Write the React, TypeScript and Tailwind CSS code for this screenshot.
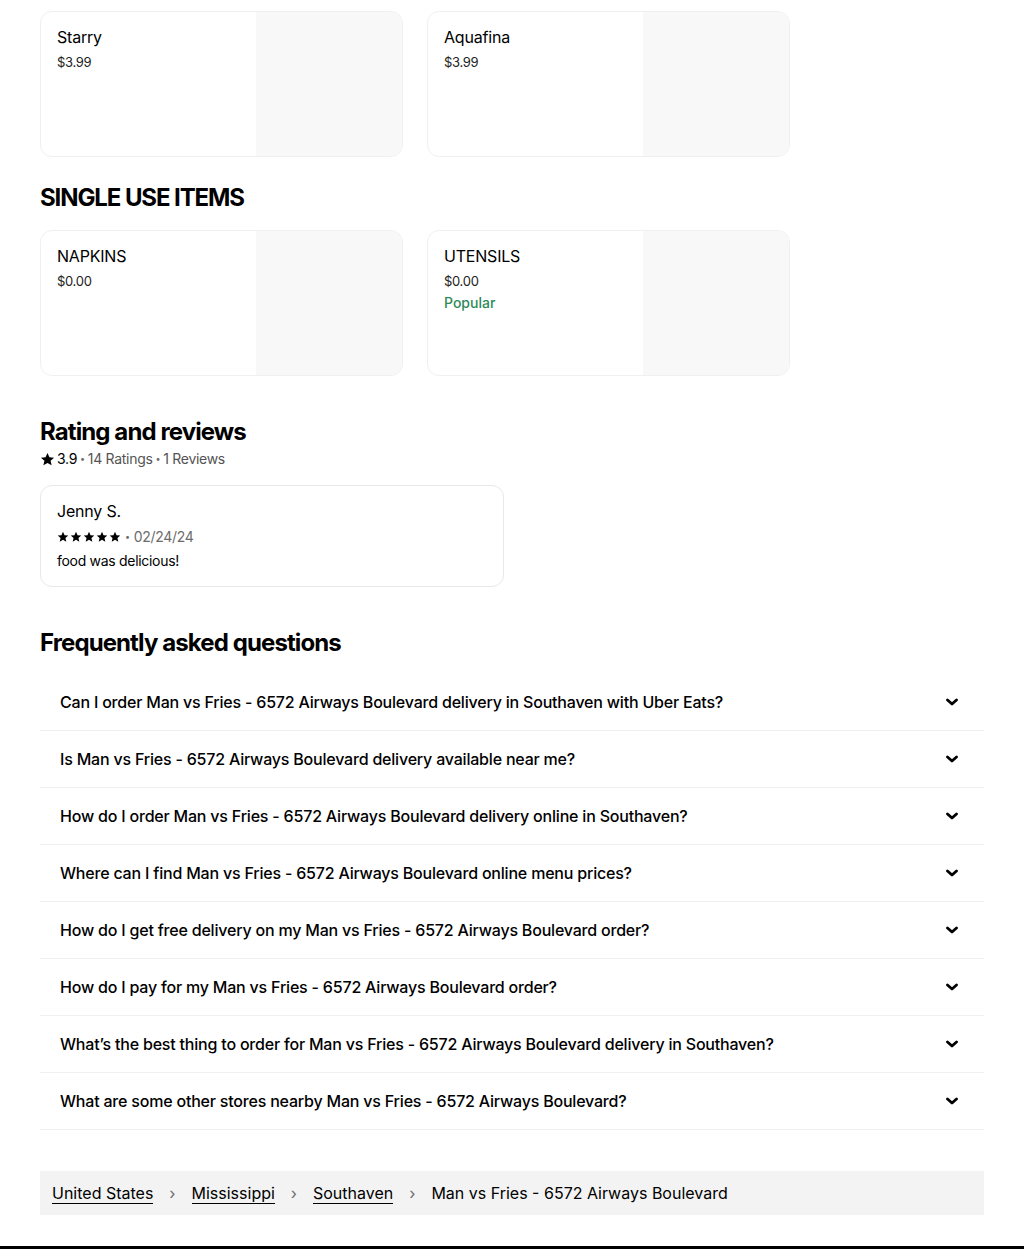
import React from "react";

const font = { fontFamily: "Inter, 'Liberation Sans', sans-serif" };

function ItemCard({ name, price, popular }: { name: string; price: string; popular?: boolean }) {
  return (
    <div className="flex h-[146px] w-[363px] overflow-hidden rounded-xl border border-[#f0f0f0] bg-white">
      <div className="flex-1 px-4 pt-[13px]">
        <div className="text-[16px] leading-6 tracking-[-0.2px] text-black">{name}</div>
        <div className="mt-[3px] text-[13px] leading-5 tracking-[-0.3px] text-[#222]">{price}</div>
        {popular && <div className="mt-[2px] text-[14px] font-medium leading-5 text-[#2e8a57]">Popular</div>}
      </div>
      <div className="h-full w-[146px] bg-[#f8f8f8]" />
    </div>
  );
}

function Star({ size = 12 }: { size?: number }) {
  return (
    <svg width={size} height={size} viewBox="0 0 24 24" fill="black">
      <path d="M12 1.5l3.1 7 7.4.6-5.6 4.9 1.7 7.3L12 17.4l-6.6 3.9 1.7-7.3L1.5 9.1l7.4-.6z" />
    </svg>
  );
}

function Chevron() {
  return (
    <svg width="12" height="8" viewBox="0 0 12 8" fill="none">
      <path d="M1.5 2L6 6L10.5 2" stroke="black" strokeWidth="2.8" strokeLinecap="round" strokeLinejoin="round" />
    </svg>
  );
}

function Dot() {
  return <span className="mx-[3px] text-[9px] leading-5 text-[#6b6b6b]">•</span>;
}

const faqs = [
  "Can I order Man vs Fries - 6572 Airways Boulevard delivery in Southaven with Uber Eats?",
  "Is Man vs Fries - 6572 Airways Boulevard delivery available near me?",
  "How do I order Man vs Fries - 6572 Airways Boulevard delivery online in Southaven?",
  "Where can I find Man vs Fries - 6572 Airways Boulevard online menu prices?",
  "How do I get free delivery on my Man vs Fries - 6572 Airways Boulevard order?",
  "How do I pay for my Man vs Fries - 6572 Airways Boulevard order?",
  "What’s the best thing to order for Man vs Fries - 6572 Airways Boulevard delivery in Southaven?",
  "What are some other stores nearby Man vs Fries - 6572 Airways Boulevard?",
];

export default function App() {
  return (
    <div className="min-h-[1249px] bg-white text-black" style={font}>
      <div className="px-10 pt-[11px]">
        <div className="flex gap-6">
          <ItemCard name="Starry" price="$3.99" />
          <ItemCard name="Aquafina" price="$3.99" />
        </div>

        <h2 className="mt-[25px] text-[24px] font-bold leading-8 tracking-[-1.1px]">SINGLE USE ITEMS</h2>
        <div className="mt-[16px] flex gap-6">
          <ItemCard name="NAPKINS" price="$0.00" />
          <ItemCard name="UTENSILS" price="$0.00" popular />
        </div>

        <h2 className="mt-[40px] text-[24px] font-bold leading-8 tracking-[-0.9px]">Rating and reviews</h2>
        <div className="mt-[1px] flex items-center text-[14px] leading-5 tracking-[-0.3px] text-[#545454]">
          <Star size={15} />
          <span className="ml-[2px] text-black">3.9</span>
          <Dot />
          <span>14 Ratings</span>
          <Dot />
          <span>1 Reviews</span>
        </div>

        <div className="mt-[16px] h-[102px] w-[464px] rounded-xl border border-[#e8e8e8] px-4 pt-[13px]">
          <div className="text-[16px] leading-6 tracking-[-0.2px]">Jenny S.</div>
          <div className="mt-[4px] flex items-center gap-[1px] text-[14px] leading-5 tracking-[-0.3px] text-[#6b6b6b]">
            <Star /><Star /><Star /><Star /><Star />
            <Dot />
            <span>02/24/24</span>
          </div>
          <div className="mt-[4px] text-[14px] leading-5 tracking-[-0.3px]">food was delicious!</div>
        </div>

        <h2 className="mt-[40px] text-[24px] font-bold leading-8 tracking-[-0.9px]">Frequently asked questions</h2>

        <div className="mt-[15px]">
          {faqs.map((q) => (
            <div key={q} className="flex h-[57px] items-center justify-between border-b border-[#f0f0f0] pl-5 pr-[26px]">
              <span className="text-[16px] font-medium leading-6 tracking-[-0.2px]">{q}</span>
              <Chevron />
            </div>
          ))}
        </div>

        <div className="mt-[41px] flex h-[44px] items-center gap-4 bg-[#f3f3f3] px-3 text-[16px]">
          <span className="border-b border-black leading-5">United States</span>
          <span className="text-[#6b6b6b]">›</span>
          <span className="border-b border-black leading-5">Mississippi</span>
          <span className="text-[#6b6b6b]">›</span>
          <span className="border-b border-black leading-5">Southaven</span>
          <span className="text-[#6b6b6b]">›</span>
          <span className="leading-5">Man vs Fries - 6572 Airways Boulevard</span>
        </div>
      </div>
      <div className="mt-[31px] h-[3px] w-full bg-black" />
    </div>
  );
}
